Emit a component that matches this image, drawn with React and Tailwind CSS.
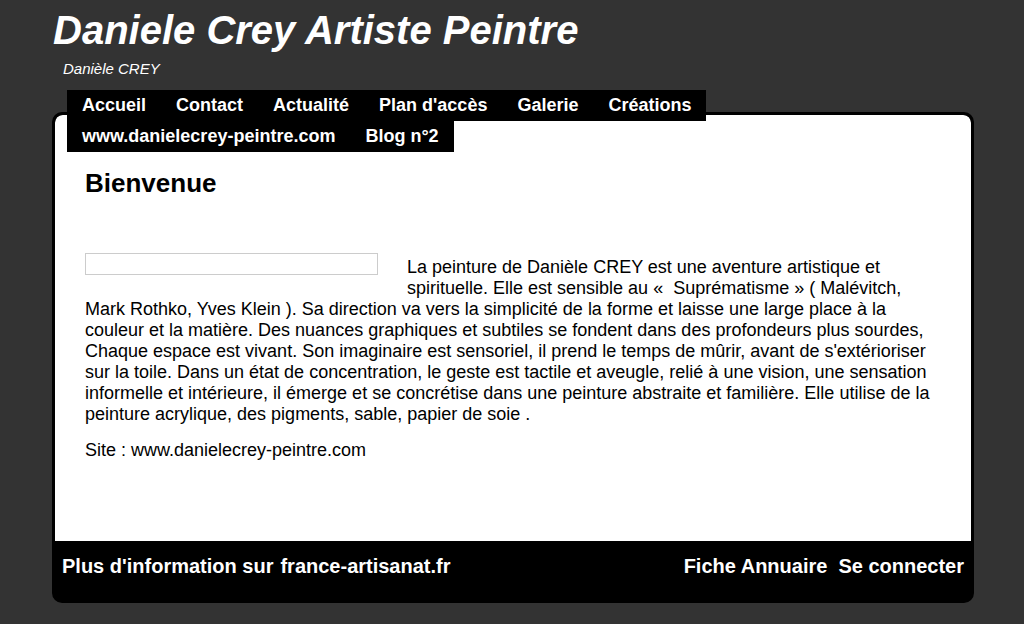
import React from "react";

const navItems = ["Accueil", "Contact", "Actualité", "Plan d'accès", "Galerie", "Créations", "www.danielecrey-peintre.com", "Blog n°2"];

export default function App() {
  return (
    <div className="w-full min-h-[624px] bg-[#333333] font-['Liberation_Sans',Arial,sans-serif] overflow-hidden">
      <div className="ml-[52px] w-[922px]">
        <h1 className="pt-[10px] ml-[1px] text-[40px] leading-[40px] font-bold italic text-white">Daniele Crey Artiste Peintre</h1>
        <div className="mt-[10px] ml-[11px] text-[15px] leading-[18px] italic text-white">Danièle CREY</div>
        <nav className="relative z-10 mt-[12px] ml-[15px] w-[870px] flex flex-wrap">
          {navItems.map((t) => (
            <a key={t} className="bg-black text-white font-bold text-[18px] leading-[31px] px-[15px] whitespace-nowrap">{t}</a>
          ))}
        </nav>
        <div className="-mt-[40px] border-[3px] border-black rounded-[10px] bg-black overflow-hidden">
          <div className="bg-white rounded-t-[8px] h-[426px] px-[30px] pt-[53px] text-black">
            <h2 className="text-[26px] leading-[30px] font-bold">Bienvenue</h2>
            <div className="mt-[59px] text-[18px] leading-[21px]">
              <div className="float-left -mt-[4px] mr-[29px] mb-[10px] w-[293px] h-[22px] border border-[#cccccc]"></div>
              La peinture de Danièle CREY est une aventure artistique et spirituelle. Elle est sensible au «&nbsp; Suprématisme » ( Malévitch, Mark Rothko, Yves Klein ). Sa direction va vers la simplicité de la forme et laisse une large place à la couleur et la matière. Des nuances graphiques et subtiles se fondent dans des profondeurs plus sourdes, Chaque espace est vivant. Son imaginaire est sensoriel, il prend le temps de mûrir, avant de s'extérioriser sur la toile. Dans un état de concentration, le geste est tactile et aveugle, relié à une vision, une sensation informelle et intérieure, il émerge et se concrétise dans une peinture abstraite et familière. Elle utilise de la peinture acrylique, des pigments, sable, papier de soie .
              <div className="clear-both"></div>
            </div>
            <p className="mt-[15px] text-[18px] leading-[21px]">Site : www.danielecrey-peintre.com</p>
          </div>
          <div className="h-[59px] px-[7px] pt-[13px] flex justify-between text-white font-bold text-[20px] leading-[24px] font-['Liberation_Sans',Arial,sans-serif]">
            <div className="flex gap-[7px]">
              <span>Plus d'information sur</span>
              <span>france-artisanat.fr</span>
            </div>
            <div className="flex gap-[11px]">
              <span>Fiche Annuaire</span>
              <span>Se connecter</span>
            </div>
          </div>
        </div>
      </div>
    </div>
  );
}
